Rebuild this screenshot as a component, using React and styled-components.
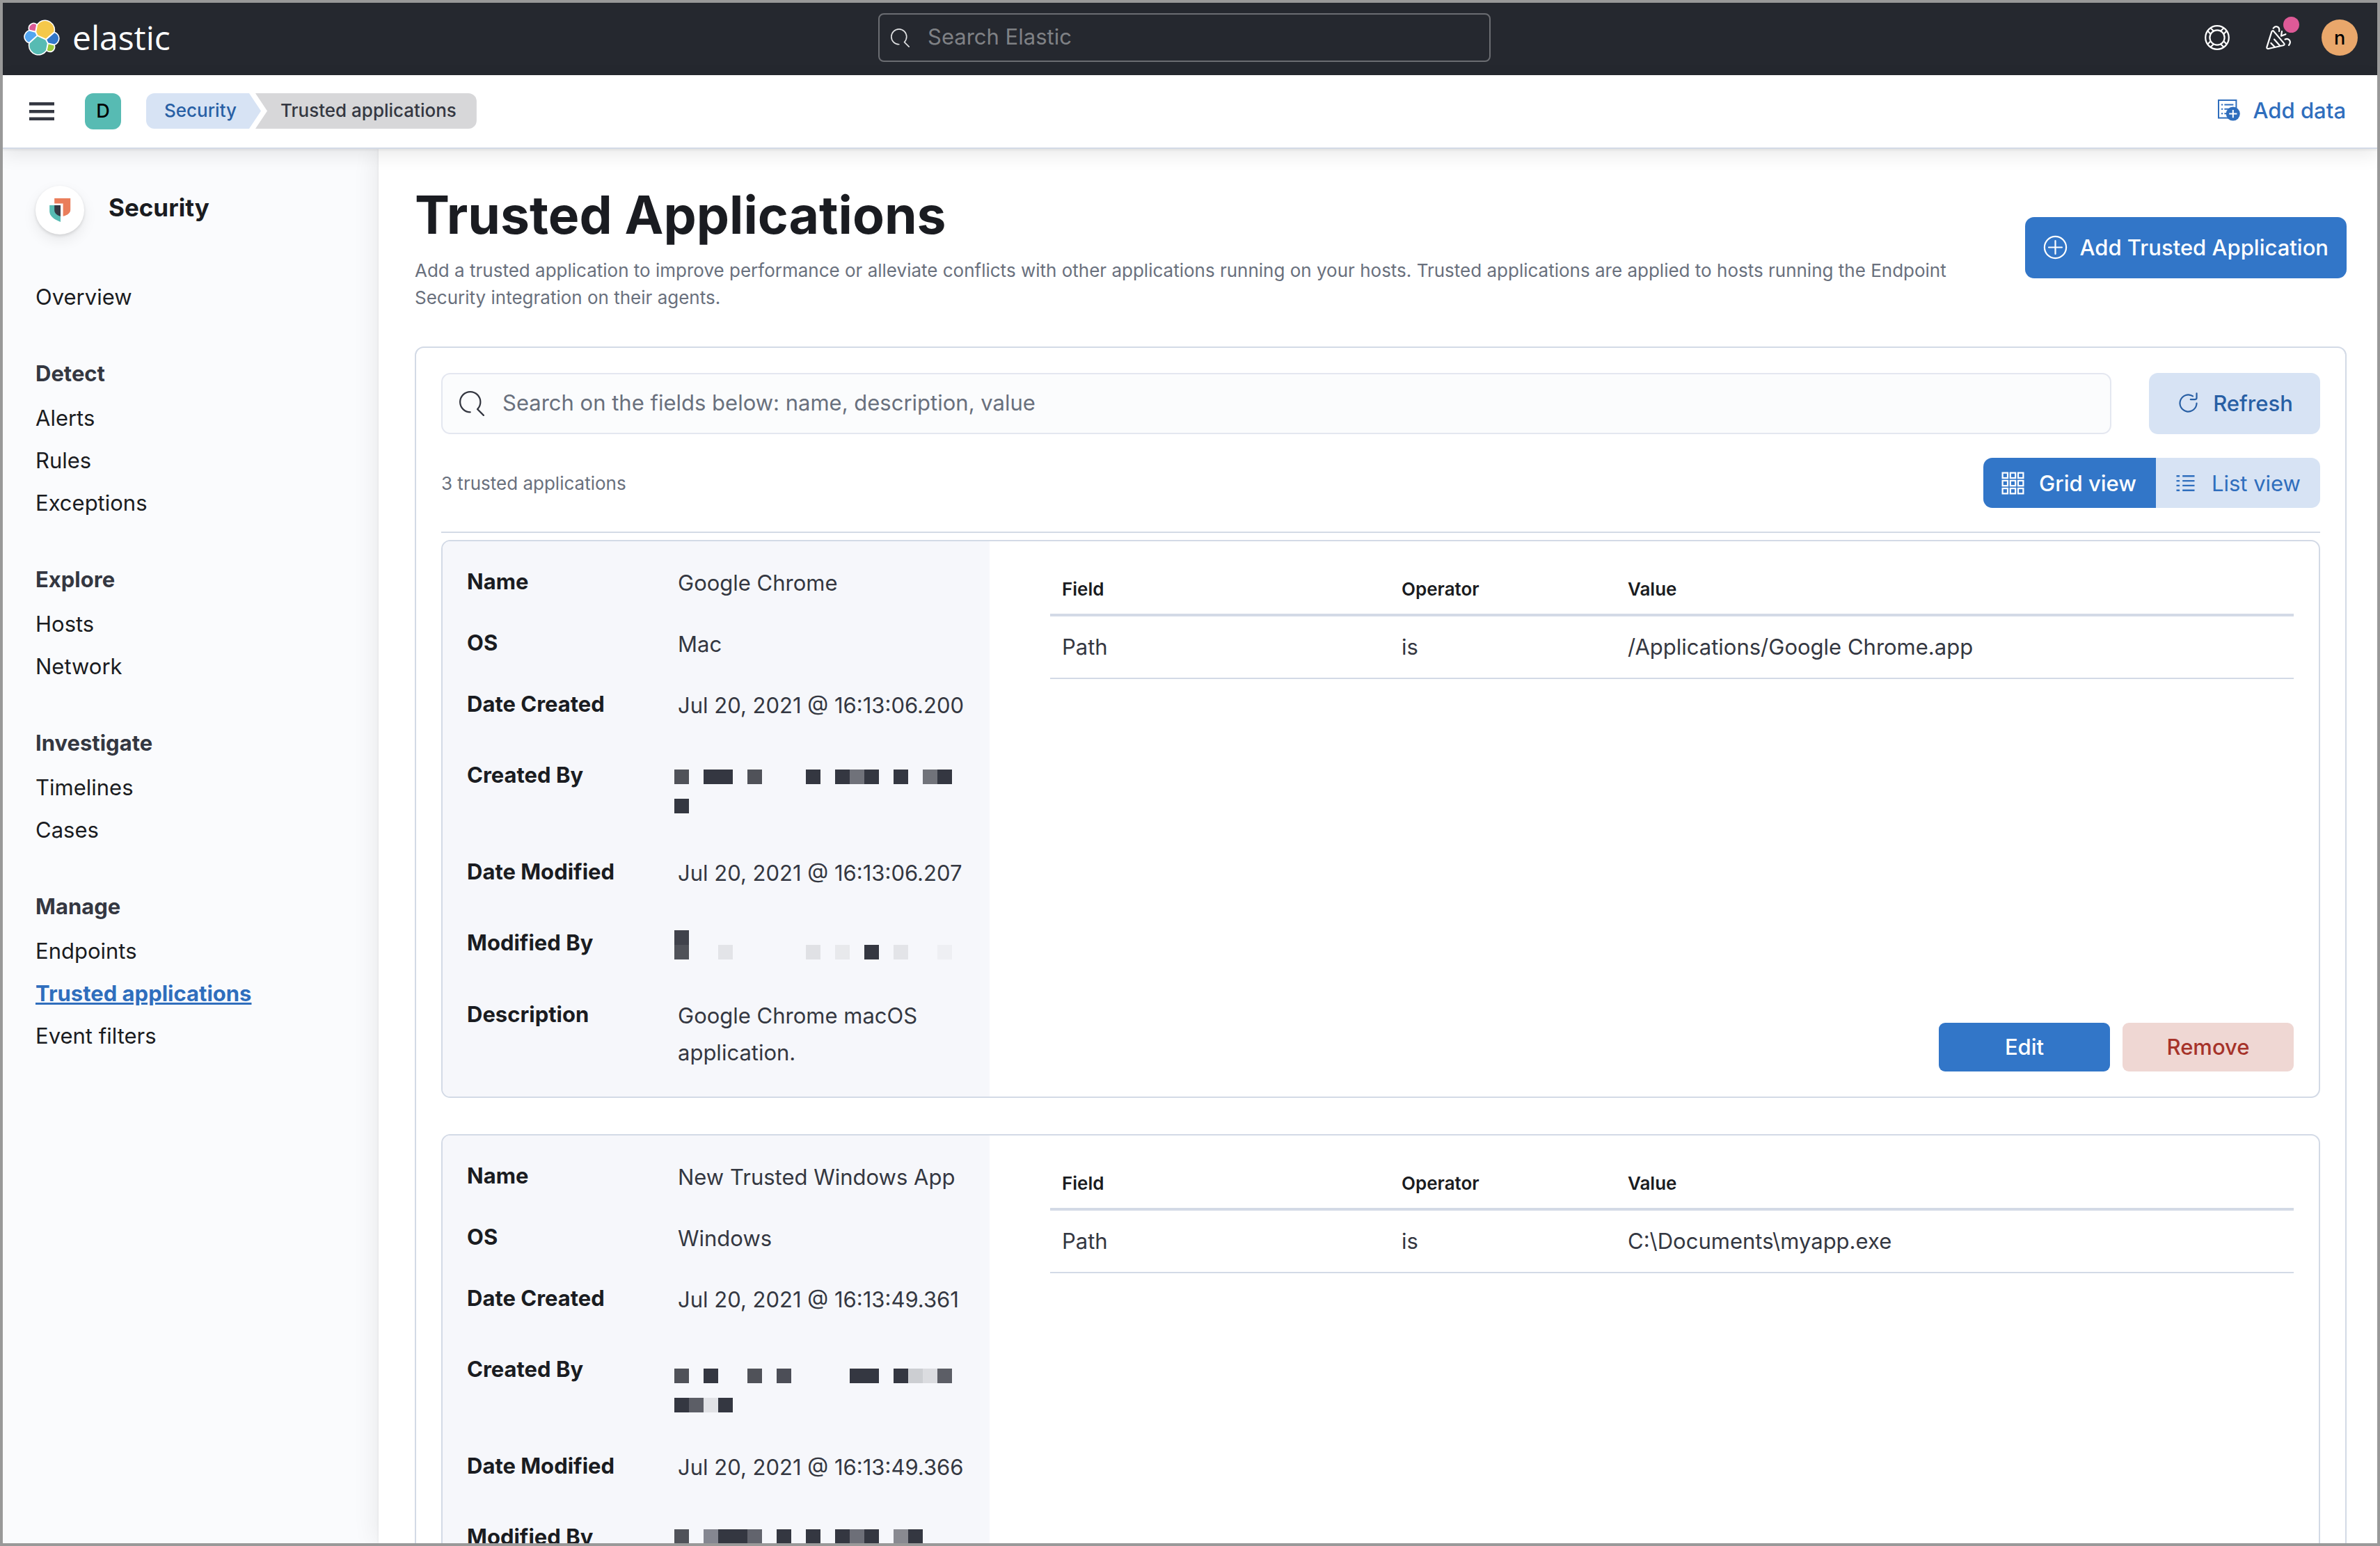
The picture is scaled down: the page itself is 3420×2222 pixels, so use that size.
import React from 'react';
import styled, { createGlobalStyle, css } from 'styled-components';

const c = {
  frame: '#999999',
  header: '#25282f',
  ink: '#1a1c21',
  text: '#343741',
  subdued: '#69707d',
  link: '#2f6ebd',
  primary: '#3276c8',
  primarySoft: '#d7e3f4',
  primaryText: '#285fa4',
  danger: '#a6332a',
  dangerSoft: '#efd7d3',
  line: '#d3dae6',
  field: '#fbfcfd',
  teal: '#57bbb3',
};

const GlobalStyle = createGlobalStyle`
  *, *::before, *::after { box-sizing: border-box; }
  body { margin: 0; font-family: Inter, "Liberation Sans", sans-serif; font-size: 31px; line-height: 53px; color: ${c.text}; }
  h1, h2, h3, p, ul, ol, dl, dd { margin: 0; padding: 0; }
  ul, ol { list-style: none; }
  a { color: inherit; text-decoration: none; }
  button, input { font: inherit; color: inherit; }
  button { cursor: pointer; border: 0; background: none; padding: 0; }
  svg { display: block; flex: none; }
`;

/* ---------- icons ---------- */

const logoPaths = [
  ['#f5c84a', 'M12.58 13.787l7.002 3.211 7.066-6.213a7.849 7.849 0 00.152-1.557c0-1.692-.539-3.34-1.54-4.704a7.897 7.897 0 00-4.02-2.869 7.87 7.87 0 00-4.932.086 7.9 7.9 0 00-3.92 3.007l-1.174 6.118 1.367 2.92z'],
  ['#57bbb3', 'M5.333 21.228A7.964 7.964 0 006.72 27.53a7.918 7.918 0 004.04 2.874 7.89 7.89 0 004.95-.097 7.92 7.92 0 003.926-3.03l1.166-6.102-1.556-2.985-7.03-3.211-6.885 6.248z'],
  ['#de5a97', 'M5.288 9.067l4.8 1.137L11.14 4.73a3.785 3.785 0 00-4.538-.023 3.82 3.82 0 00-1.316 4.36z'],
  ['#54a6f0', 'M4.872 10.214a5.294 5.294 0 00-2.595 1.882 5.324 5.324 0 00-.142 6.124 5.287 5.287 0 002.505 1.995l6.733-6.101-1.235-2.65-5.266-1.25z'],
  ['#9cc93e', 'M20.873 27.277a3.736 3.736 0 002.285.785 3.783 3.783 0 003.101-1.63 3.813 3.813 0 00.451-3.484l-4.8-1.125-1.037 5.454z'],
  ['#3276c8', 'M21.848 20.563l5.28 1.238a5.34 5.34 0 002.622-1.938 5.37 5.37 0 001.013-3.11 5.312 5.312 0 00-.936-3.01 5.283 5.283 0 00-2.475-1.944l-6.904 6.07 1.4 2.694z'],
];

const ElasticLogo = () => (
  <svg width="52" height="52" viewBox="0 0 32 32" aria-hidden="true">
    <g fill="#fff" stroke="#fff" strokeWidth="2" strokeLinejoin="round">
      {logoPaths.map(([fill, d]) => <path key={fill} d={d} />)}
    </g>
    {logoPaths.map(([fill, d]) => <path key={fill} fill={fill} d={d} />)}
  </svg>
);

const SearchIcon = ({ size }) => (
  <svg width={size} height={size} viewBox="0 0 16 16" fill="currentColor" aria-hidden="true">
    <path d="M11.271 11.978l3.872 3.873a.502.502 0 00.708 0 .502.502 0 000-.708l-3.565-3.564c2.38-2.747 2.267-6.923-.342-9.532-2.73-2.73-7.17-2.73-9.898 0-2.728 2.729-2.728 7.17 0 9.9a6.955 6.955 0 004.949 2.05.5.5 0 000-1 5.96 5.96 0 01-4.242-1.757 6.01 6.01 0 010-8.486 6.004 6.004 0 018.484 0 6.01 6.01 0 010 8.486.5.5 0 000 .738z" />
  </svg>
);

const HelpIcon = () => (
  <svg width="36" height="36" viewBox="0 0 36 36" fill="none" stroke="#fff" strokeWidth="2.2" aria-hidden="true">
    <circle cx="18" cy="18" r="16.8" />
    <circle cx="18" cy="18" r="10.6" />
    {[45, 135, 225, 315].map((a) => (
      <path key={a} transform={`rotate(${a} 18 18)`} d="M28 15h6.4M28 21h6.4" />
    ))}
  </svg>
);

const CheerIcon = () => (
  <svg width="36" height="36" viewBox="0 0 36 36" fill="none" stroke="#fff" strokeWidth="2.2" strokeLinecap="round" strokeLinejoin="round" aria-hidden="true">
    <path d="M8.4 9.4L1.4 31.6Q.9 34.4 3.7 34L24.8 29.3Q28 28.3 25.7 25.9L11.2 8.9Q9.5 7.3 8.4 9.4z" />
    <path d="M7.4 26l5.6 5.8M12 20.6l8.4 9.3" />
    <path d="M10.7 4.6C13.6.4 20.6 1.6 19 9" />
    <path d="M28.4 13.2L22 15.7 23 9.2" />
    <path d="M27.6 20.6c5.6-2.6 9.6 3.4 5.4 8.4" />
  </svg>
);

const MenuIcon = () => (
  <svg width="36" height="26" viewBox="0 0 36 26" fill={c.text} aria-hidden="true">
    <path d="M0 0h36v4.4H0zM0 11h36v4.4H0zM0 21.6h36V26H0z" />
  </svg>
);

const AddDataIcon = () => (
  <svg width="32" height="31" viewBox="0 0 32 31" fill="none" stroke="currentColor" strokeWidth="2" aria-hidden="true">
    <path d="M1 1h25.4v25.6H1z" />
    <path d="M5 7.4h2.2M9.4 7.4h13M5 13.8h2.2M9.4 13.8h13M5 20.2h2.2M9.4 20.2h6" />
    <circle cx="21.8" cy="20.6" r="10" fill="currentColor" stroke="none" />
    <path d="M16.2 20.6h11.2M21.8 15v11.2" stroke="#fff" />
  </svg>
);

const SecurityIcon = () => (
  <svg width="35" height="36" viewBox="0 0 35 36" aria-hidden="true">
    <path fill="#ea7e5b" d="M9.2 1H32.2V17.5c0 4.5-4 7.8-10.6 9.3V8.4H9.2z" />
    <path fill={c.teal} d="M2.2 11H18V35C8.5 31.5 2.2 26.5 2.2 19.5z" />
    <path fill="#343741" d="M9.2 11H18V27C12.5 25.5 9.2 22 9.2 18z" />
  </svg>
);

const PlusCircleIcon = () => (
  <svg width="35" height="35" viewBox="0 0 35 35" fill="none" stroke="currentColor" strokeWidth="2.2" strokeLinecap="round" aria-hidden="true">
    <circle cx="17.5" cy="17.5" r="15.6" />
    <path d="M8 17.5h19M17.5 8v19" />
  </svg>
);

const RefreshIcon = () => (
  <svg width="35" height="35" viewBox="0 0 16 16" fill="currentColor" aria-hidden="true">
    <path d="M11.228 2.942a.5.5 0 11-.538.842A5 5 0 1013 8a.5.5 0 111 0 6 6 0 11-2.772-5.058zM14 1.5v3A1.5 1.5 0 0112.5 6h-3a.5.5 0 010-1h3a.5.5 0 00.5-.5v-3a.5.5 0 111 0z" />
  </svg>
);

const GridIcon = () => (
  <svg width="35" height="35" viewBox="0 0 35 35" fill="none" stroke="currentColor" strokeWidth="2.2" aria-hidden="true">
    {[0, 1, 2].map((r) => [0, 1, 2].map((k) => (
      <rect key={`${r}${k}`} x={2.6 + k * 11.2} y={2.6 + r * 11.2} width="7.4" height="7.4" />
    )))}
  </svg>
);

const ListIcon = () => (
  <svg width="35" height="35" viewBox="0 0 35 35" fill="none" stroke="currentColor" strokeWidth="2.4" aria-hidden="true">
    {[7.3, 14.1, 20.9, 27.7].map((y) => <path key={y} d={`M4.5 ${y}h4.6M13.2 ${y}h17.3`} />)}
  </svg>
);

/* ---------- shell ---------- */

const Frame = styled.div`
  display: flex;
  flex-direction: column;
  height: 100vh;
  overflow: hidden;
  border: 4px solid ${c.frame};
  background: #fff;
`;

const TopBar = styled.header`
  display: flex;
  flex: none;
  align-items: center;
  justify-content: space-between;
  height: 104px;
  padding: 0 10px 4px 30px;
  background: ${c.header};
`;

const Brand = styled.a`
  display: flex;
  align-items: center;
  gap: 18px;
  width: 228px;
  color: #fff;
  font: 400 48px/64px "Open Sans", "Noto Sans", sans-serif;
`;

const GlobalSearch = styled.label`
  display: flex;
  align-items: center;
  gap: 26px;
  width: 880px;
  height: 70px;
  padding: 0 16px;
  border: 2px solid #6b6d72;
  border-radius: 8px;
  color: #dfe0e2;
`;

const BareInput = styled.input`
  flex: 1;
  min-width: 0;
  height: 56px;
  padding: 0 0 3px;
  border: 0;
  outline: 0;
  background: transparent;
  &::placeholder { color: ${(p) => p.$hint}; opacity: 1; }
`;

const TopActions = styled.div`
  display: flex;
  align-items: center;
`;

const TopButton = styled.button`
  position: relative;
  display: flex;
  align-items: center;
  justify-content: center;
  width: 88px;
  height: 88px;
`;

const NewsDot = styled.span`
  position: absolute;
  top: 14px;
  right: 14px;
  width: 23px;
  height: 23px;
  border-radius: 50%;
  background: #de5a97;
`;

const Avatar = styled.span`
  display: flex;
  align-items: center;
  justify-content: center;
  width: 52px;
  height: 52px;
  border-radius: ${(p) => (p.$round ? '50%' : '12px')};
  background: ${(p) => p.$tone};
  color: #000;
  font-size: 27px;
  font-weight: 500;
`;

const NavBar = styled.div`
  position: relative;
  z-index: 2;
  display: flex;
  flex: none;
  align-items: center;
  gap: 36px;
  height: 106px;
  padding: 0 45px 1px 30px;
  border-bottom: 2px solid ${c.line};
  background: #fff;
  box-shadow: 0 2px 3px rgba(0, 0, 0, 0.06), 0 8px 26px rgba(0, 0, 0, 0.09);
`;

const MenuButton = styled.button`
  display: flex;
  align-items: center;
  justify-content: center;
  width: 52px;
  height: 52px;
`;

const Crumbs = styled.ol`
  display: flex;
  flex: 1;
`;

const Crumb = styled.li`
  height: 51px;
  font-size: 26px;
  font-weight: 500;
  line-height: 49px;
  ${(p) => (p.$last
    ? css`
        margin-left: -8px;
        padding: 0 29px 0 36px;
        border-radius: 0 12px 12px 0;
        background: #d7d7d9;
        color: ${c.text};
        clip-path: polygon(0 0, 100% 0, 100% 100%, 0 100%, 17px 50%);
      `
    : css`
        padding: 0 35px 0 26px;
        border-radius: 12px 0 0 12px;
        background: ${c.primarySoft};
        color: ${c.primaryText};
        clip-path: polygon(0 0, calc(100% - 17px) 0, 100% 50%, calc(100% - 17px) 100%, 0 100%);
      `)}
`;

const AddData = styled.a`
  display: flex;
  align-items: center;
  gap: 19px;
  padding-bottom: 2px;
  color: ${c.link};
  font-weight: 500;
`;

const Body = styled.div`
  display: flex;
  flex: 1;
  min-height: 0;
`;

/* ---------- side navigation ---------- */

const Side = styled.nav`
  flex: none;
  width: 540px;
  padding: 53px 47px;
  background: #fafbfd;
`;

const Solution = styled.div`
  display: flex;
  align-items: center;
  gap: 35px;
  margin-bottom: 59px;
`;

const SolutionMark = styled.span`
  display: flex;
  align-items: center;
  justify-content: center;
  width: 70px;
  height: 70px;
  border-radius: 50%;
  background: #fff;
  box-shadow: 0 2px 4px rgba(0, 0, 0, 0.12), 0 8px 20px rgba(0, 0, 0, 0.08);
`;

const SolutionName = styled.h2`
  color: ${c.ink};
  font-size: 35px;
  font-weight: 700;
  line-height: 62px;
  height: 70px;
`;

const NavGroup = styled.section`
  margin-bottom: 49px;
`;

const NavHeading = styled.h3`
  margin-bottom: 3px;
  font-size: 31px;
  font-weight: 700;
  line-height: 61px;
`;

const NavLink = styled.a`
  display: block;
  line-height: 61px;
  color: ${(p) => (p.$active ? c.link : c.ink)};
  font-weight: ${(p) => (p.$active ? 700 : 400)};
  text-decoration: ${(p) => (p.$active ? 'underline' : 'none')};
`;

/* ---------- page ---------- */

const Main = styled.main`
  z-index: 1;
  flex: 1;
  min-width: 0;
  padding: 51px 44px 0 52px;
  background: #fff;
  box-shadow: 0 0 4px rgba(0, 0, 0, 0.07), 0 0 36px rgba(0, 0, 0, 0.09);
`;

const PageHead = styled.div`
  display: flex;
  align-items: center;
  gap: 35px;
  margin-bottom: 51px;
`;

const PageTitle = styled.h1`
  margin-bottom: 16px;
  color: ${c.ink};
  font-size: 75px;
  font-weight: 700;
  line-height: 88px;
`;

const Note = styled.p`
  color: ${c.subdued};
  font-size: 26px;
  line-height: 39px;
`;

const HeadText = styled.div`
  flex: 1;
  min-width: 0;
`;

const tones = {
  primary: css`background: ${c.primary}; color: #fff;`,
  soft: css`background: ${c.primarySoft}; color: ${c.primaryText};`,
  danger: css`background: ${c.dangerSoft}; color: ${c.danger};`,
};

const Button = styled.button`
  display: flex;
  flex: none;
  align-items: center;
  justify-content: center;
  gap: 18px;
  min-width: 246px;
  height: ${(p) => (p.$small ? '70px' : '88px')};
  padding: 0 26px 2px;
  border-radius: ${(p) => (p.$small ? '9px' : '13px')};
  font-weight: 500;
  ${(p) => tones[p.$tone]}
`;

const Panel = styled.section`
  padding: 36px 36px 0;
  border: 2px solid ${c.line};
  border-bottom: 0;
  border-radius: 13px 13px 0 0;
`;

const SearchRow = styled.div`
  display: flex;
  gap: 54px;
  margin-bottom: 34px;
`;

const SearchField = styled.label`
  display: flex;
  flex: 1;
  align-items: center;
  gap: 26px;
  height: 88px;
  padding: 0 24px;
  border: 2px solid #e4e7f0;
  border-radius: 13px;
  background: ${c.field};
`;

const ViewRow = styled.div`
  display: flex;
  align-items: center;
  justify-content: space-between;
  padding-bottom: 34px;
  margin-bottom: 10px;
  border-bottom: 2px solid ${c.line};
`;

const Toggle = styled.div`
  display: flex;
  overflow: hidden;
  border-radius: 13px;
`;

const ToggleButton = styled.button`
  display: flex;
  align-items: center;
  gap: 20px;
  height: 72px;
  padding: 0 28px 0 25px;
  background: ${(p) => (p.$on ? c.primary : c.primarySoft)};
  color: ${(p) => (p.$on ? '#fff' : c.link)};
  font-weight: ${(p) => (p.$on ? 500 : 400)};
`;

const CardList = styled.div`
  display: grid;
  gap: 52px;
`;

const Card = styled.article`
  display: grid;
  grid-template-columns: 786px minmax(0, 1fr);
  min-height: 802px;
  overflow: hidden;
  border: 2px solid ${c.line};
  border-radius: 13px;
`;

const Details = styled.dl`
  display: flex;
  flex-direction: column;
  gap: 33px;
  padding: 31px 26px 30px 35px;
  background: #f6f7fb;
`;

const Detail = styled.div`
  display: grid;
  grid-template-columns: 303px minmax(0, 1fr);
  padding: ${(p) => p.$pad};
`;

const Term = styled.dt`
  color: ${c.ink};
  font-weight: 700;
`;

const Desc = styled.dd`
  padding-top: 2px;
`;

const Mosaic = styled.dd`
  display: grid;
  grid-template-columns: repeat(19, 21px);
  grid-auto-rows: 21px;
  height: ${(p) => p.$lines * 53}px;
  margin-left: -5px;
  padding-top: ${(p) => p.$drop}px;
`;

const Cell = styled.span`
  grid-column: ${(p) => p.$col + 1};
  grid-row: ${(p) => p.$row + 1};
  background: ${(p) => p.$shade};
`;

const Conditions = styled.div`
  display: flex;
  flex-direction: column;
  justify-content: space-between;
  padding: 34px 36px 36px 87px;
`;

const Table = styled.table`
  width: 100%;
  table-layout: fixed;
  border-collapse: collapse;
  text-align: left;
`;

const HeadCell = styled.th`
  width: ${(p) => p.$w};
  height: 72px;
  padding: 0 17px 2px;
  border-bottom: 4px solid ${c.line};
  color: ${c.ink};
  font-size: 26px;
  font-weight: 600;
`;

const BodyCell = styled.td`
  height: 91px;
  padding: 0 17px 2px;
  border-bottom: 2px solid ${c.line};
`;

const Actions = styled.div`
  display: flex;
  justify-content: flex-end;
  gap: 18px;
`;

/* ---------- data ---------- */

const navGroups = [
  ['Detect', ['Alerts', 'Rules', 'Exceptions']],
  ['Explore', ['Hosts', 'Network']],
  ['Investigate', ['Timelines', 'Cases']],
  ['Manage', ['Endpoints', 'Trusted applications', 'Event filters']],
];

const D = '#343741';
const G = '#505259';

const apps = [
  {
    details: [
      { term: 'Name', value: 'Google Chrome' },
      { term: 'OS', value: 'Mac' },
      { term: 'Date Created', value: 'Jul 20, 2021 @ 16:13:06.200' },
      {
        term: 'Created By', pad: '14px 0 0', lines: 2, drop: 19,
        cells: [[0, 0, G], [2, 0, D], [3, 0, D], [5, 0, G], [9, 0, D], [11, 0, D], [12, 0, '#70727a'], [13, 0, D], [15, 0, D], [17, 0, '#71737a'], [18, 0, D], [0, 2, D]],
      },
      { term: 'Date Modified', value: 'Jul 20, 2021 @ 16:13:06.207' },
      {
        term: 'Modified By', pad: '14px 0 17px', lines: 1, drop: 9,
        cells: [[0, 0, '#40424b'], [0, 1, G], [3, 1, '#e3e4e8'], [9, 1, '#e0e1e5'], [11, 1, '#e8e9ec'], [13, 1, D], [15, 1, '#e3e4e8'], [18, 1, '#eeeff3']],
      },
      { term: 'Description', value: 'Google Chrome macOS application.' },
    ],
    condition: ['Path', 'is', '/Applications/Google Chrome.app'],
    editable: true,
  },
  {
    details: [
      { term: 'Name', value: 'New Trusted Windows App' },
      { term: 'OS', value: 'Windows' },
      { term: 'Date Created', value: 'Jul 20, 2021 @ 16:13:49.361' },
      {
        term: 'Created By', pad: '14px 0 0', lines: 2, drop: 26,
        cells: [[0, 0, G], [2, 0, D], [5, 0, G], [7, 0, '#4c4e57'], [12, 0, D], [13, 0, D], [15, 0, D], [16, 0, '#ccced2'], [17, 0, '#dbdce0'], [18, 0, '#5c5e66'], [0, 2, D], [1, 2, '#5c5e66'], [2, 2, '#e1e2e6'], [3, 2, D]],
      },
      { term: 'Date Modified', value: 'Jul 20, 2021 @ 16:13:49.366' },
      {
        term: 'Modified By', pad: '14px 0 17px', lines: 1, drop: 16,
        cells: [[0, 0, G], [2, 0, '#858791'], [3, 0, D], [4, 0, D], [5, 0, '#62646d'], [7, 0, D], [9, 0, D], [11, 0, D], [12, 0, '#6d6f78'], [13, 0, D], [15, 0, '#898a91'], [16, 0, D]],
      },
    ],
    condition: ['Path', 'is', 'C:\\Documents\\myapp.exe'],
  },
];

const AppCard = ({ details, condition, editable }) => (
  <Card>
    <Details>
      {details.map((d) => (
        <Detail key={d.term} $pad={d.pad || '0'}>
          <Term>{d.term}</Term>
          {d.cells ? (
            <Mosaic $lines={d.lines} $drop={d.drop}>
              {d.cells.map(([col, row, shade]) => (
                <Cell key={`${col}-${row}`} $col={col} $row={row} $shade={shade} />
              ))}
            </Mosaic>
          ) : (
            <Desc>{d.value}</Desc>
          )}
        </Detail>
      ))}
    </Details>
    <Conditions>
      <Table>
        <thead>
          <tr>
            <HeadCell scope="col" $w="488px">Field</HeadCell>
            <HeadCell scope="col" $w="325px">Operator</HeadCell>
            <HeadCell scope="col" $w="auto">Value</HeadCell>
          </tr>
        </thead>
        <tbody>
          <tr>
            {condition.map((v) => <BodyCell key={v}>{v}</BodyCell>)}
          </tr>
        </tbody>
      </Table>
      {editable && (
        <Actions>
          <Button $small $tone="primary" type="button">Edit</Button>
          <Button $small $tone="danger" type="button">Remove</Button>
        </Actions>
      )}
    </Conditions>
  </Card>
);

export default function App() {
  return (
    <>
      <GlobalStyle />
      <Frame>
        <TopBar>
          <Brand href="#home"><ElasticLogo />elastic</Brand>
          <GlobalSearch>
            <SearchIcon size={27} />
            <BareInput type="search" placeholder="Search Elastic" $hint="#7f8185" />
          </GlobalSearch>
          <TopActions>
            <TopButton type="button"><HelpIcon /></TopButton>
            <TopButton type="button"><CheerIcon /><NewsDot /></TopButton>
            <TopButton type="button"><Avatar $round $tone="#e9a76b">n</Avatar></TopButton>
          </TopActions>
        </TopBar>
        <NavBar>
          <MenuButton type="button"><MenuIcon /></MenuButton>
          <Avatar $tone={c.teal}>D</Avatar>
          <Crumbs>
            <Crumb><a href="#security">Security</a></Crumb>
            <Crumb $last>Trusted applications</Crumb>
          </Crumbs>
          <AddData href="#add"><AddDataIcon />Add data</AddData>
        </NavBar>
        <Body>
          <Side>
            <Solution>
              <SolutionMark><SecurityIcon /></SolutionMark>
              <SolutionName>Security</SolutionName>
            </Solution>
            <NavGroup><NavLink href="#overview">Overview</NavLink></NavGroup>
            {navGroups.map(([title, items]) => (
              <NavGroup key={title}>
                <NavHeading>{title}</NavHeading>
                <ul>
                  {items.map((item) => (
                    <li key={item}>
                      <NavLink href="#nav" $active={item === 'Trusted applications'}>{item}</NavLink>
                    </li>
                  ))}
                </ul>
              </NavGroup>
            ))}
          </Side>
          <Main>
            <PageHead>
              <HeadText>
                <PageTitle>Trusted Applications</PageTitle>
                <Note>
                  Add a trusted application to improve performance or alleviate conflicts with other applications running on your hosts. Trusted applications are applied to hosts running the Endpoint Security integration on their agents.
                </Note>
              </HeadText>
              <Button $tone="primary" type="button"><PlusCircleIcon />Add Trusted Application</Button>
            </PageHead>
            <Panel>
              <SearchRow>
                <SearchField>
                  <SearchIcon size={36} />
                  <BareInput type="search" placeholder="Search on the fields below: name, description, value" $hint={c.subdued} />
                </SearchField>
                <Button $tone="soft" type="button"><RefreshIcon />Refresh</Button>
              </SearchRow>
              <ViewRow>
                <Note>3 trusted applications</Note>
                <Toggle>
                  <ToggleButton $on type="button"><GridIcon />Grid view</ToggleButton>
                  <ToggleButton type="button"><ListIcon />List view</ToggleButton>
                </Toggle>
              </ViewRow>
              <CardList>
                {apps.map((app) => <AppCard key={app.details[0].value} {...app} />)}
              </CardList>
            </Panel>
          </Main>
        </Body>
      </Frame>
    </>
  );
}
